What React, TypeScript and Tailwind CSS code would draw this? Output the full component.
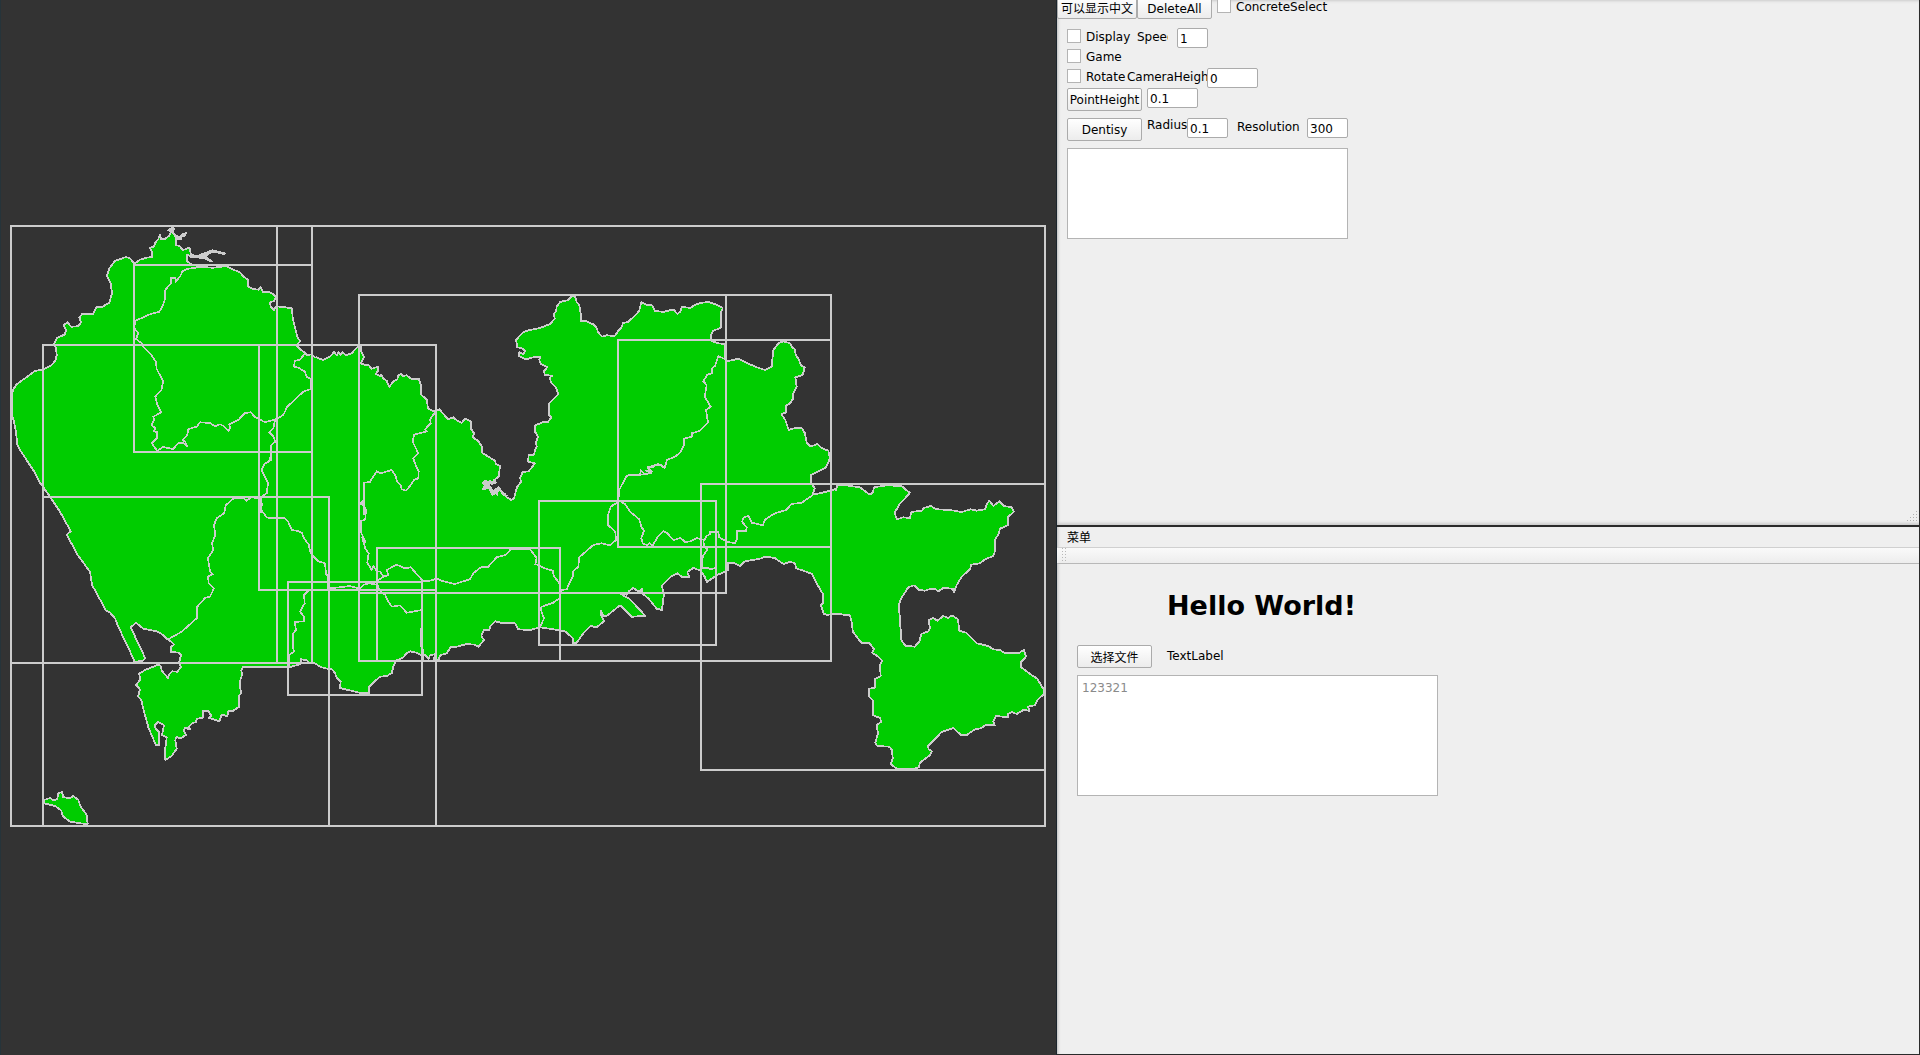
import React from 'react';

/* Coastline and district borders, surveyed in tiles. Each tile has an origin
   on the canvas and holds points at three units per canvas pixel. */
type Tile = [number, number, string];

const coast: Tile[] = [
  [0, 215, '36,600 36,575 38,525 50,508 75,490 105,468 130,463 155,450 167,435 170,420 168,400 163,385 170,370 195,358 198,345 191,330 203,322 213,335 235,334 243,322 238,308 247,296 280,296 290,276 305,276 328,264 336,235 332,205 321,182 328,160 345,138 378,126 390,130 403,146 420,134 440,128 456,126 456,110 450,98 462,95 465,85 475,72 480,60 483,72 495,72 508,62 514,50 504,46 516,38 522,40 518,52 530,68 540,74 546,62 558,54 552,64 540,66 528,62 528,90 540,94 548,106 562,100 570,100 572,118 590,124 605,118 622,112 636,106 655,110 675,116 650,110 636,110 618,122 622,132 636,140 615,130 600,128 570,122 560,120 562,140 575,148 600,156 640,158 680,153 695,162 720,172 728,182 745,196 745,215 760,222 775,224 782,216 788,230 805,230 818,236 829,246 822,258 810,262 812,275 822,285 828,274 850,276 876,280 878,310 886,340 892,365 900,378 890,392 900,402 913,412 920,420 936,418 945,428'],
  [310, 280, '20,232 38,240 60,230 72,216 80,226 86,216 92,224 98,216 108,226 125,220 138,205 146,197 154,200 154,215 162,232 152,250 168,256 176,256 185,266 205,260 204,272 198,282 210,288 214,284 220,296 230,302 238,320 250,304 262,298 264,288 272,282 280,288 290,286 305,298 326,296 334,320 334,345 350,358 354,385 372,394 388,388 402,404 415,418 430,412 442,422 455,428 465,416 482,424 484,448 492,460 488,472 504,482 516,500 516,518 535,530 555,542 558,552 570,558 566,590 552,600 558,608 545,612 540,602 534,608 526,602 518,608 526,616 518,628 530,620 535,622 548,645 552,632 562,645 555,630 565,622 578,640 586,642 590,652 604,660 612,656 616,640 622,620 634,605 630,594 634,585 638,576 656,574 675,550 654,545 656,526 672,524 674,514 680,500 678,488 684,470 675,455 676,436 700,426 714,426 724,412 716,405 718,370 745,342 738,322 722,306 720,292 726,288 704,284 702,274 712,262 692,252 688,240 690,230 670,232 648,238 626,228 628,216 640,222 646,212 636,205 622,202 618,180 640,156 660,150 690,144 720,132 734,116 732,100 738,95 740,80 750,66 775,60 785,48 795,50 800,66 808,75 812,100 814,124 830,124 852,134 860,144 864,156 876,170 890,166 914,168 924,154'],
  [500, 280, '366,140 368,130 385,125 408,104 418,92 424,66 440,74 456,76 464,92 490,96 512,90 522,90 532,102 540,96 546,80 570,84 590,72 608,68 625,66 650,74 668,84 662,100 662,144 640,152 632,168 636,184 655,190 674,192 676,232 682,244 715,236 740,248 765,260 795,270 815,260 820,210 835,190 850,184 870,190 876,202 885,208 887,226 895,235 903,256 914,262 908,285 886,292 890,320 880,340 880,355 870,370 858,376 858,398 844,402 856,420 866,450 885,444 905,444 915,460 920,488 930,498 944,496 952,492 965,504 985,512 990,535 978,562 955,574 932,586 932,606 944,625 938,644 960,640 990,632 1004,628'],
  [800, 460, '108,90 112,76 130,74 150,78 180,82 198,96 210,104 218,98 222,82 260,76 305,78 316,88 330,98 316,114 300,130 284,158 290,178 310,172 330,174 334,156 365,152 372,144 392,138 410,148 450,150 485,156 512,148 530,152 555,148 562,130 568,122 580,138 598,124 612,138 635,142 642,155 625,170 624,195 600,206 596,222 584,240 586,270 580,288 555,298 540,310 514,314 510,328 485,350 470,375 462,398 458,386 430,384 415,394 405,386 392,386 375,392 358,390 342,376 325,382 304,415 296,435 300,480 304,540 316,557 344,560 358,545 364,522 385,514 390,505 386,480 400,474 412,482 430,468 445,474 456,466 474,478 478,512 498,518 520,540 530,550 565,558 580,568 600,570 615,580 655,580 672,570 678,590 664,605 664,622 690,642 712,656 732,690 732,702 712,720 704,736 684,740 688,752 670,750 650,762 636,756 624,762 624,772 588,768 580,785 584,796 555,796 545,804 525,808 500,825 482,824 460,804 425,816 384,858 386,868 396,874 390,885 360,908 356,922 335,928 290,926 272,912 278,895 276,870 268,860 232,858 226,848 234,820 230,795 244,785 240,774 218,765 218,720 208,710 208,686 224,684 226,656 242,648 240,616 246,602 232,588 216,578 222,568 208,548 184,548 170,530 158,514 156,490 150,466 140,466 120,462 80,464 72,462 62,435 70,430 70,404 50,370 36,342 10,332'],
  [530, 460, '798,325 795,310 780,305 762,312 745,302 735,294 705,290 690,296 645,304 630,318 610,308 594,308 594,330 560,346 530,366 524,350 512,332 490,324 472,336 478,352 455,350 442,340 420,352 395,378 402,400 396,450 380,446 355,415 336,400 336,385 328,396 310,384 296,394 290,404 272,402 300,418 330,450 346,468 305,470 270,436 250,452 230,468 220,468 212,452 212,464 222,484 200,502 182,498 160,520 140,548 128,548 128,534 105,514 70,508 30,502'],
  [240, 480, '870,450 835,448 825,430 790,430 766,424 750,440 748,450 732,450 724,468 732,480 724,490 716,500 704,494 680,492 650,500 632,502 620,520 600,526 596,540 580,540 588,522 570,526 566,536 556,526 545,526 528,518 510,514 500,520 490,532 468,542 460,560 455,580 440,588 420,590 400,608 388,620 388,638 365,640 300,624 302,604 292,596 285,580 276,568 262,566 245,562 220,548 208,548 200,540 182,538 182,552 148,562 60,562 30,560 10,560 4,570 6,585 0,604 0,620'],
  [0, 640, '724,160 716,168 718,200 700,212 685,214 682,228 665,224 658,244 640,238 625,234 635,228 625,214 610,212 608,234 590,236 588,246 576,250 565,262 570,268 555,264 552,272 558,285 540,296 530,290 526,300 530,326 515,348 496,360 494,330 498,312 500,292 486,285 492,256 475,246 464,256 468,268 476,275 476,316 468,316 456,288 445,262 438,235 432,215 424,180 414,170 420,148 408,135 420,120 418,100 440,88 475,74 482,78 485,92 504,114 508,102 516,94 532,95 543,80 537,70 543,45 538,38 512,36 514,20 522,14 512,4'],
  [0, 450, '500,567 490,555 470,544 430,536 408,518 392,532 436,625 428,632 404,636 395,615 355,530 345,505 330,488 318,482 290,430 276,405 270,365 235,318 200,254 212,244 180,185 150,140 118,95 103,65 60,0'],
  [0, 215, '52,690 48,650 42,620'],
];

const island: Tile[] = [
  [0, 640, '132,490 132,480 150,474 162,482 172,476 175,460 186,456 190,472 212,474 220,468 235,480 242,500 260,525 263,552 240,550 210,545 188,528 184,512 165,498'],
];

const borders: Tile[][] = [
  [[0, 215, '600,156 560,162 548,168 540,185 528,198 526,188 512,190 514,203 496,225 494,255 488,272 478,290 450,298 405,318 403,340 415,355 408,372 425,385 430,396 450,415 468,440 470,462 490,500 484,525 466,545 472,570 484,592 460,605 462,615 455,630 466,640 462,648 472,652 470,670 455,685 472,708 488,696 520,702 535,684 550,684 560,692 556,680 548,675 562,660 565,642 590,635 600,622 630,624 645,634 660,628 672,634 685,648 690,640 688,628 715,615 735,594 752,592 765,606 795,622 830,612 850,600 862,575 910,530 932,522 932,492 920,486 915,470 895,458 882,455 884,438 900,434 913,418']],
  [[0, 215, '826,612 820,640 808,652 820,664 826,680 814,690 812,738'], [0, 450, '812,20 806,35 795,40 784,60 804,98 800,130 782,142 786,165 780,185 790,188 800,202 808,204 855,205 865,216 875,240 890,242 905,248 912,264 926,284 930,302 936,315 955,334 975,340 978,372 985,378 985,418']],
  [[0, 450, '786,185 778,146 755,142 740,152 730,144 700,146 678,165 672,190 650,205 642,225 646,255 636,280 640,300 624,325 630,365 638,372 624,380 626,400 642,415 630,440 615,444 592,470 590,505 545,545 505,568']],
  [[0, 450, '985,418 925,422 912,435 914,460 900,485 912,500 912,514 884,516 888,540 878,552 878,590 882,605 866,616 868,650']],
  [[240, 480, '265,325 300,322 330,318 358,326 372,314 388,310 412,314 420,332 436,345 442,360 456,380 480,376 500,398 545,390 543,500 550,510 550,540']],
  [
    [310, 280, '376,396 360,418 362,430 345,448 350,454 335,458 312,464 308,485 325,520 310,535 314,548 326,575 325,595 312,600 300,618 288,632 275,628 272,615 262,606 256,586 245,570 225,576 210,580 200,574 188,592 180,606 163,608 162,660 150,670 160,675 168,690 162,704'],
    [240, 480, '372,60 368,70 378,90 376,118 362,124 362,155 378,188 366,170 376,205 386,220 382,248 395,270 400,258 412,275 420,274 430,290 445,285 440,270 470,254 495,265 512,262 548,302 565,304 590,296 610,304 645,312 670,304 690,298 700,280 725,260 745,260 770,232 798,224 812,208 840,206 870,208 890,234 886,252 915,265 938,272 942,288 958,310 960,340 958,355 940,368 905,380 902,388 912,415 900,442'],
  ],
  [[240, 480, '430,290 408,306 414,320']],
  [
    [530, 460, '90,400 95,390 110,388 130,345 130,334 145,320 148,292 190,255 215,250 240,256 258,240 256,215 234,195 234,165 242,140 265,125 268,90 288,50 300,44 330,45 333,32 345,44 362,38 355,22 370,22 375,14 392,14 404,22'],
    [500, 280, '501,540 525,530 540,518 552,494 552,476 575,470 575,460 600,452 624,428 618,390 632,380 614,350 620,315 610,304 622,284 636,280 636,265 645,258 655,228 676,238'],
  ],
  [[500, 280, '418,585 450,580 440,572 454,574 444,565 455,558 476,552 494,564 501,540']],
  [[530, 460, '268,122 285,132 300,155 328,178 334,200 342,212 334,235 338,250 352,256 358,250 368,256 385,228 400,214 412,220 430,240 452,234 465,246 482,244 500,234 524,240 530,228 540,222 540,216 565,216 568,232 590,245 615,250 622,235 622,212 648,212 650,202 636,185 642,172 655,168 665,188 698,196 706,178 735,160 768,150 785,132 815,128 848,106']],
  [[530, 460, '520,240 522,258 532,268 518,290 516,325 535,324 540,328 556,324']],
];

/* Narrow inlets, drawn with a heavier line than the borders. */
const inlets: Tile[][] = [
  [[0, 215, '570,124 605,124 622,114 636,108 655,112 675,116']],
  [[0, 215, '605,124 618,130 634,138']],
  [[0, 215, '516,38 518,52 532,70 542,70 546,60 556,56']],
  [[310, 280, '558,604 540,610 522,606 536,618 520,626 540,622 550,642 562,636 566,624 580,642 592,650']],
];

const frames: [number, number, number, number][] = [
  [11, 226, 1045, 826], [11, 226, 312, 663], [277, 226, 312, 663], [134, 265, 312, 452],
  [43, 345, 436, 826], [43, 497, 329, 826], [259, 345, 436, 590], [359, 295, 831, 661],
  [359, 295, 726, 593], [618, 340, 831, 547], [701, 484, 1045, 770], [539, 501, 716, 645],
  [377, 548, 560, 661], [288, 582, 422, 695],
];

const toPoints = (tiles: Tile[]) =>
  tiles
    .map(([ox, oy, pts]) =>
      pts
        .split(' ')
        .map((p) => {
          const [x, y] = p.split(',').map(Number);
          return `${(ox + x / 3).toFixed(1)},${(oy + y / 3).toFixed(1)}`;
        })
        .join(' '),
    )
    .join(' ');

function MapCanvas() {
  return (
    <svg width="1056" height="1055" viewBox="0 0 1056 1055" shapeRendering="crispEdges" className="block">
      <g fill="#00cc00" stroke="#cccccc" strokeWidth="1.8" strokeLinejoin="round">
        <polygon points={toPoints(coast)} />
        <polygon points={toPoints(island)} />
      </g>
      <g fill="none" stroke="#cccccc" strokeWidth="1.7">
        {borders.map((b, i) => (
          <polyline key={i} points={toPoints(b)} />
        ))}
      </g>
      <g fill="none" stroke="#cccccc" strokeWidth="2.6">
        {inlets.map((b, i) => (
          <polyline key={i} points={toPoints(b)} />
        ))}
      </g>
      <g fill="none" stroke="#cccccc" strokeWidth="2">
        {frames.map(([l, t, r, b], i) => (
          <rect key={i} x={l} y={t} width={r - l} height={b - t} />
        ))}
      </g>
    </svg>
  );
}

function Check({ label, className = '' }: { label: string; className?: string }) {
  return (
    <label className={`flex h-[14px] shrink-0 items-center gap-[5px] ${className}`}>
      <span className="size-[14px] shrink-0 border border-[#b4b4b4] bg-white" />
      <span className="pt-[2px]">{label}</span>
    </label>
  );
}

function Push({ children, className }: { children: React.ReactNode; className: string }) {
  return (
    <button className={`flex h-[23px] shrink-0 items-center justify-center rounded-[2px] border border-[#ababab] bg-linear-to-b from-white to-[#ececec] ${className}`}>
      {children}
    </button>
  );
}

function Field({ value, className }: { value: string; className: string }) {
  return (
    <span className={`flex h-5 shrink-0 items-center rounded-[2px] border border-[#ababab] bg-white pt-px pl-[2px] ${className}`}>
      {value}
    </span>
  );
}

export default function App() {
  return (
    <div className="flex h-[1055px] w-[1920px] overflow-hidden bg-[#333333] font-['DejaVu_Sans','Noto_Sans_CJK_SC',sans-serif] text-[12px] leading-[14px] text-black">
      <div className="w-[1057px] shrink-0 border-r border-[#1c262e] shadow-[inset_1px_0_0_#26343a]">
        <MapCanvas />
      </div>
      <div className="flex w-[863px] flex-col border-r border-b border-[#2a2a2a]">
        <section className="relative h-[525px] shrink-0 bg-[#efefef] shadow-[inset_3px_0_3px_-2px_#bbbbbb,inset_0_3px_3px_-2px_#cccccc,inset_0_-4px_3px_-2px_#cccccc]">
          <div className="flex h-[28px] items-start">
            <Push className="-mt-1 w-[80px] pt-[3px] whitespace-nowrap">可以显示中文</Push>
            <Push className="-mt-1 w-[75px] pt-[2px]">DeleteAll</Push>
            <Check label="ConcreteSelect" className="-mt-px ml-[5px]" />
          </div>
          <div className="flex h-5 items-start pl-[10px]">
            <Check label="Display" className="mt-px w-[70px]" />
            <span className="mt-[2px] w-[31px] overflow-hidden">Speed</span>
            <Field value="1" className="ml-[9px] w-[31px]" />
          </div>
          <div className="flex h-5 items-start pt-px pl-[10px]">
            <Check label="Game" />
          </div>
          <div className="flex h-5 items-start pl-[10px]">
            <Check label="Rotate" className="mt-px w-[60px]" />
            <span className="mt-[2px] w-[80px] overflow-hidden tracking-[-0.05px]">CameraHeight</span>
            <Field value="0" className="w-[51px]" />
          </div>
          <div className="flex h-[30px] items-start pl-[10px]">
            <Push className="w-[75px]">PointHeight</Push>
            <Field value="0.1" className="ml-[5px] w-[51px]" />
          </div>
          <div className="flex h-[30px] items-start pl-[10px]">
            <Push className="w-[75px]">Dentisy</Push>
            <span className="ml-[5px] w-[40px]">Radius</span>
            <Field value="0.1" className="w-[41px]" />
            <span className="mt-[2px] ml-[9px] w-[70px]">Resolution</span>
            <Field value="300" className="w-[41px]" />
          </div>
          <div className="ml-[10px] h-[91px] w-[281px] border border-[#b4b4b4] bg-white" />
          <svg width="12" height="12" className="absolute right-[1px] bottom-[2px]" fill="#b0b0b0" shapeRendering="crispEdges">
            <path d="M10 0h1v1h-1zM7 3h1v1h-1zM10 3h1v1h-1zM4 6h1v1h-1zM7 6h1v1h-1zM10 6h1v1h-1zM1 9h1v1h-1zM4 9h1v1h-1zM7 9h1v1h-1zM10 9h1v1h-1z" />
          </svg>
        </section>
        <div className="h-[2px] shrink-0 bg-[#2a2a2a]" />
        <section className="flex grow flex-col bg-[#efefef] shadow-[inset_3px_0_3px_-2px_#bbbbbb]">
          <div className="flex h-5 shrink-0 items-center pt-[2px] pl-[10px]">菜单</div>
          <div className="flex h-[17px] shrink-0 border-t border-b border-t-[#d0d0d0] border-b-[#b8b8b8] bg-linear-to-b from-[#fafafa] to-[#ededed] pl-[5px]">
            <svg width="5" height="15" fill="#b8b8b8" shapeRendering="crispEdges">
              {[0, 3, 6, 9, 12].map((y) => (
                <path key={y} d={`M0 ${y}h1v1h-1zM3 ${y}h1v1h-1z`} />
              ))}
            </svg>
          </div>
          <h1 className="mt-[25px] ml-[110px] text-[27px] leading-[34px] font-bold">Hello World!</h1>
          <div className="mt-[22px] flex h-[30px] items-start pl-5">
            <Push className="w-[75px] pt-[2px]">选择文件</Push>
            <span className="mt-1 ml-[15px]">TextLabel</span>
          </div>
          <div className="ml-5 h-[121px] w-[361px] border border-[#b4b4b4] bg-white px-1 pt-[5px] text-[#8a8a8a]">123321</div>
        </section>
      </div>
    </div>
  );
}
